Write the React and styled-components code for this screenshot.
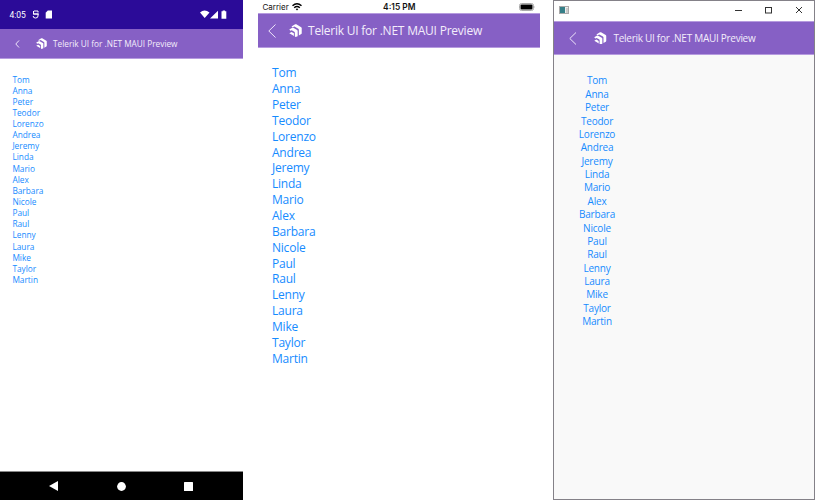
import React from "react";
import styled, { createGlobalStyle } from "styled-components";

const names = ["Tom", "Anna", "Peter", "Teodor", "Lorenzo", "Andrea", "Jeremy", "Linda", "Mario", "Alex", "Barbara", "Nicole", "Paul", "Raul", "Lenny", "Laura", "Mike", "Taylor", "Martin"];

const Global = createGlobalStyle`
  * { box-sizing: border-box; }
  body { margin: 0; background: #fff; font-family: "Open Sans", sans-serif; overflow: hidden; }
  svg { display: block; flex: none; }
`;

const Gallery = styled.main`
  display: grid;
  grid-template-columns: 243px 282px 262px;
  column-gap: 15px;
  width: 820px;
  height: 500px;
`;

const Device = styled.section`
  display: flex;
  flex-direction: column;
  height: 500px;
  background: #fff;
`;

const DesktopWindow = styled(Device)`
  margin-left: -2px;
  width: 262px;
  background: #f9f9f9;
  border: 1px solid #848188;
`;

const AndroidStatus = styled.div`
  display: flex;
  align-items: center;
  height: 29px;
  padding: 0 16px 0 9.5px;
  background: #2b0b98;
  color: #fff;
  font: 8.5px Roboto, sans-serif;
`;

const StatusIcons = styled.svg`
  margin-left: 6px;
`;

const PhoneStatus = styled.div`
  display: grid;
  grid-template-columns: 1fr auto 1fr;
  align-items: center;
  height: 13px;
  padding: 0 4px 0 4.5px;
  color: #111;
  font: 8px Inter, sans-serif;
`;

const Carrier = styled.span`
  display: flex;
  align-items: center;
  gap: 3.5px;
`;

const Clock = styled.strong`
  font-weight: 600;
  font-size: 8.4px;
`;

const BatterySlot = styled.span`
  justify-self: end;
`;

const Spacer = styled.span`
  flex: 1;
`;

const TitleBar = styled.div`
  display: flex;
  align-items: center;
  height: 20px;
  padding: 0 11px 2px 5px;
  background: #fff;
`;

const Header = styled.header`
  display: flex;
  align-items: center;
  flex: none;
  height: ${(p) => p.$height}px;
  padding-left: ${(p) => p.$inset}px;
  background: #8660c5;
  color: #fff;
  border: 0 solid #b69bdf;
  border-width: ${(p) => p.$edges};
`;

const LogoMark = styled.svg`
  width: ${(p) => p.$size}px;
  height: ${(p) => p.$size}px;
  margin: 0 ${(p) => p.$after}px 0 ${(p) => p.$before}px;
`;

const Title = styled.h1`
  margin: 0;
  font-weight: 400;
  font-size: ${(p) => p.$size}px;
  letter-spacing: ${(p) => p.$track || 0}px;
  line-height: 1.36;
  padding-top: ${(p) => p.$drop || 0}px;
  white-space: nowrap;
  color: #f3edfb;
`;

const NameList = styled.ul`
  flex: 1;
  list-style: none;
  margin: 0;
  padding: ${(p) => p.$top}px 0 0 ${(p) => p.$left}px;
  width: ${(p) => p.$width || 150}px;
  text-align: ${(p) => p.$align || "left"};
  font-size: ${(p) => p.$size}px;
  letter-spacing: ${(p) => p.$track || 0}px;
  line-height: ${(p) => p.$pitch}px;
  color: #168bff;
`;

const NavBar = styled.nav`
  display: flex;
  align-items: center;
  justify-content: space-between;
  height: 29px;
  padding: 0 50px 0 49px;
  border-top: 1px solid #888;
  background: #000;
`;

const Logo = (props) => (
  <LogoMark viewBox="0 0 24 24" fill="#fff" {...props}>
    <path d="M4.5 4.7L11.5.6Q12.5 0 13.5.6L22.5 5.8Q23.5 6.4 23.5 7.5V17Q23.5 18 22.6 18.6L18.2 21.2V10.4Q18.2 9.3 17.2 8.7L10 4.6 7 6.2Z" />
    <path d="M.5 10L6 6.9Q7 6.4 8 7L15 11Q16 11.6 16 12.7V22.4L12.2 24 10.8 23V15.8Q10.8 14.7 9.8 14.1L5 11.5 2.5 12.6Z" />
    <path d="M.5 17L4.6 14.6 9 17.2V22L6.2 20.3Z" />
  </LogoMark>
);

const Back = ({ width, height }) => (
  <svg width={width} height={height} viewBox={`0 0 ${width} ${height}`} fill="none" stroke="#eee5fa" strokeWidth="1">
    <path d={`M${width - 0.5} .5 L.8 ${height / 2} L${width - 0.5} ${height - 0.5}`} />
  </svg>
);

const Names = (props) => (
  <NameList {...props}>{names.map((n) => <li key={n}>{n}</li>)}</NameList>
);

const heading = "Telerik UI for .NET MAUI Preview";

export default function App() {
  return (
    <>
      <Global />
      <Gallery>
        <Device>
          <AndroidStatus>
            4:05
            <StatusIcons width="20" height="9" viewBox="0 0 20 9" fill="none">
              <path d="M2 1H6M1.5 1V4H6M1 4h6M6 4v2Q6 8 3.5 8T1.2 6M6 1v1.5" stroke="#fff" strokeWidth="1" />
              <path d="M15.8.6H20V8.4h-6.3V2.8Z" fill="#fff" />
            </StatusIcons>
            <Spacer />
            <svg width="27" height="9" viewBox="0 0 27 9" fill="#fff">
              <path d="M0 2.4Q4.5-1.3 9.5 2.4L4.7 8ZM18 .7V8.4H10ZM21.5 1.3h1.2V.4h2.4v.9h1.2v7.4H21.5Z" />
            </svg>
          </AndroidStatus>
          <Header $height={30} $inset={15} $edges="0 0 1px">
            <Back width={4.5} height={8} />
            <Logo $size={11} $before={16.5} $after={6} />
            <Title $size={8.25}>{heading}</Title>
          </Header>
          <Names $top={14.5} $left={12.4} $size={8.3} $pitch={11.14} />
          <NavBar>
            <svg width="9" height="10" viewBox="0 0 9 10" fill="#fff"><path d="M0 5L9 0V10Z" /></svg>
            <svg width="9" height="9" viewBox="0 0 9 9" fill="#fff"><circle cx="4.5" cy="4.5" r="4.4" /></svg>
            <svg width="9" height="9" viewBox="0 0 9 9" fill="#fff"><rect width="9" height="9" rx=".5" /></svg>
          </NavBar>
        </Device>

        <Device>
          <PhoneStatus>
            <Carrier>
              Carrier
              <svg width="10" height="8" viewBox="0 0 10 8" fill="none" stroke="#000" strokeWidth="1.5">
                <path d="M.5 2.8Q5-1.2 9.5 2.8M2.2 4.7Q5 2.3 7.8 4.7" />
                <path d="M3.7 6.1Q5 5 6.3 6.1L5 7.5Z" fill="#000" stroke="none" />
              </svg>
            </Carrier>
            <Clock>4:15 PM</Clock>
            <BatterySlot>
              <svg width="17" height="8" viewBox="0 0 17 8">
                <rect x=".5" y=".5" width="14" height="7" rx="2" fill="#fff" stroke="#aaa" />
                <rect x="1.5" y="1.5" width="12" height="5" rx="1" />
                <path d="M15.5 2.8q1 1.2 0 2.4Z" fill="#999" />
              </svg>
            </BatterySlot>
          </PhoneStatus>
          <Header $height={35} $inset={10} $edges="1px 0">
            <Back width={8} height={14} />
            <Logo $size={13} $before={12.5} $after={6.5} />
            <Title $size={12} $track={-0.22} $drop={2}>{heading}</Title>
          </Header>
          <Names $top={17.3} $left={14} $size={12} $track={-0.22} $pitch={15.86} />
        </Device>

        <DesktopWindow>
          <TitleBar>
            <svg width="10" height="8" viewBox="0 0 10 8">
              <rect x=".5" y=".5" width="9" height="7" fill="#eee" stroke="#aaa" />
              <path d="M1 1h5v6H1Z" fill="#367f88" /><path d="M7 2h2v5H7Z" fill="#ccc" />
            </svg>
            <Spacer />
            <svg width="69" height="8" viewBox="0 0 69 8" fill="none" stroke="#333">
              <path d="M1 4.5h7M62 1l6 6M68 1l-6 6" /><rect x="31.5" y="1.5" width="6" height="5.5" />
            </svg>
          </TitleBar>
          <Header $height={34} $inset={15} $edges="1px 0">
            <Back width={7.5} height={13} />
            <Logo $size={12.5} $before={17.5} $after={7} />
            <Title $size={10} $track={-0.28} $drop={1}>{heading}</Title>
          </Header>
          <Names $top={19.4} $left={0} $width={86} $align="center" $size={10} $track={-0.2} $pitch={13.37} />
        </DesktopWindow>
      </Gallery>
    </>
  );
}
